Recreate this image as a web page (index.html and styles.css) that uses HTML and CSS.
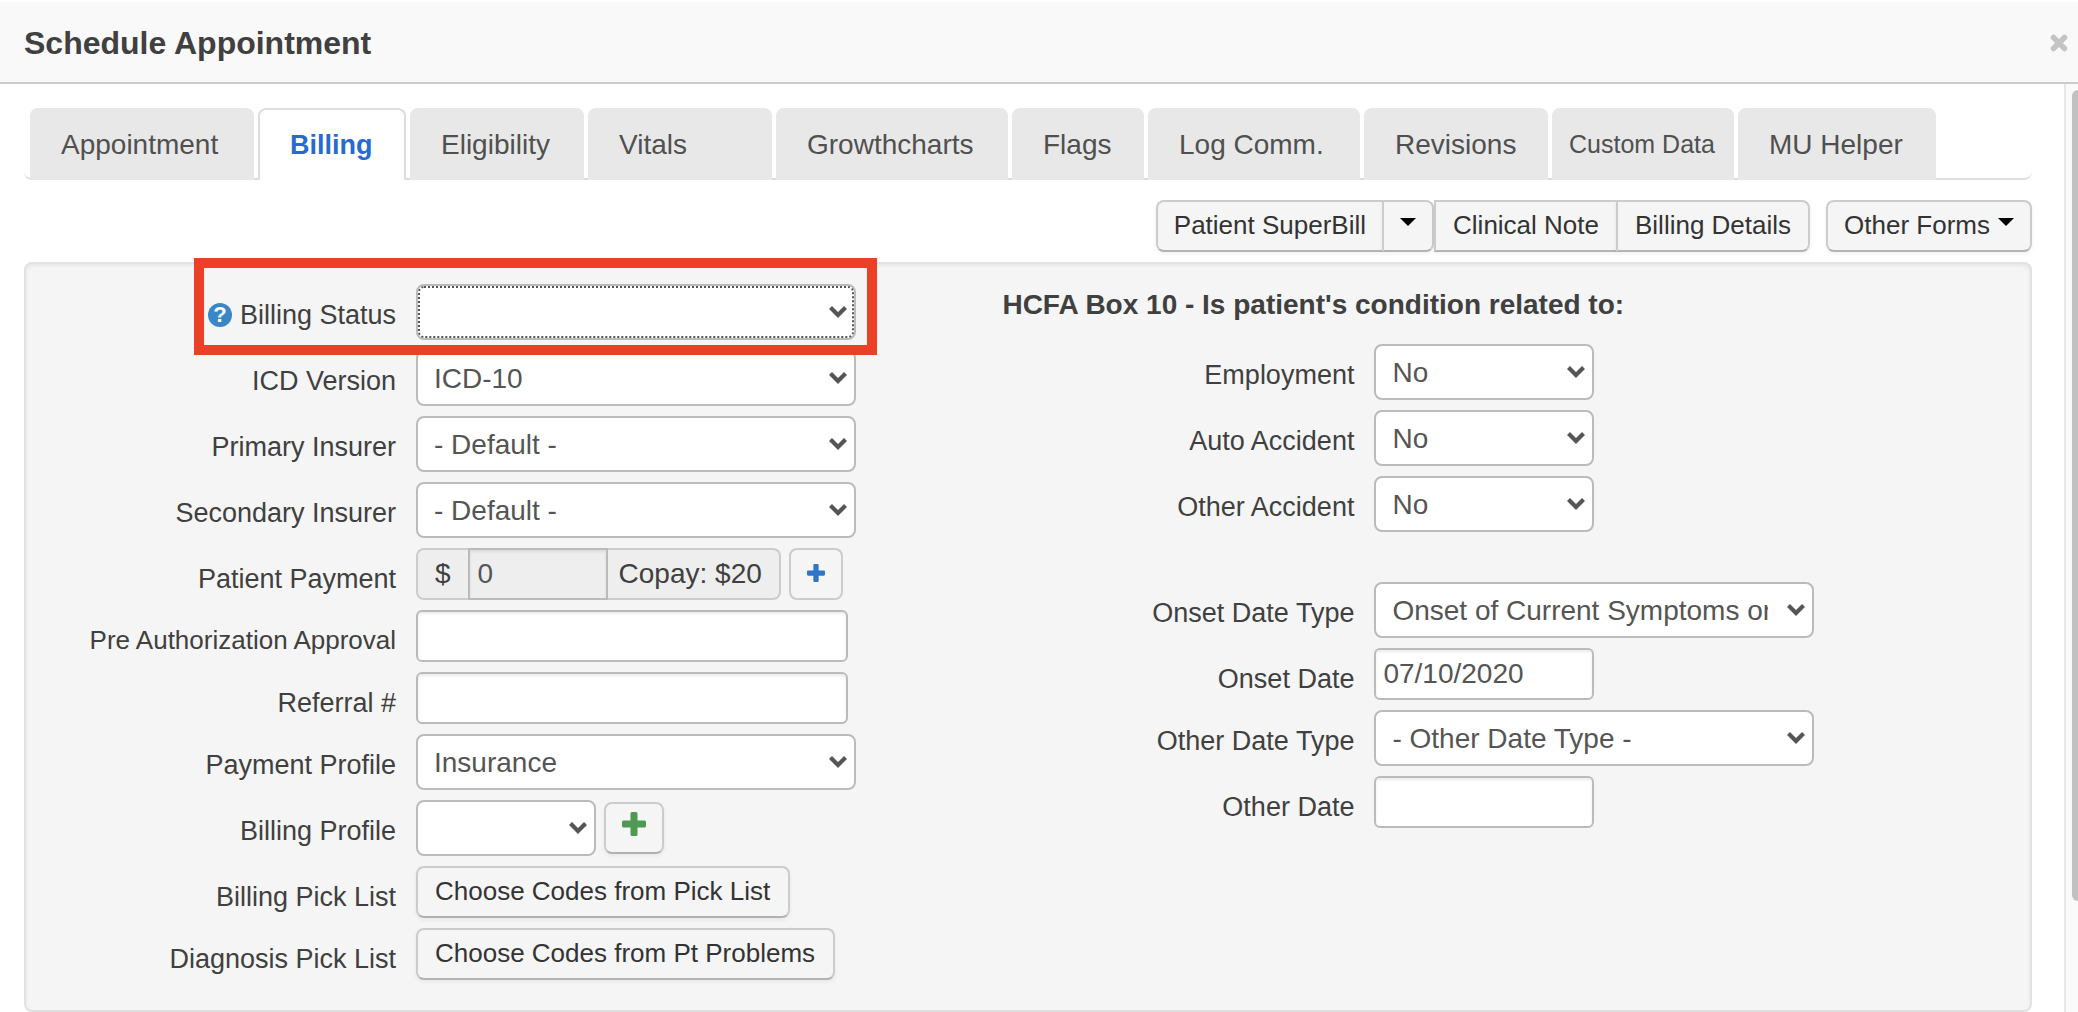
FILE: index.html
```html
<!DOCTYPE html>
<html lang="en">
<head>
<meta charset="utf-8">
<title>Schedule Appointment</title>
<link rel="stylesheet" href="styles.css">
</head>
<body>
<svg class="sprite" aria-hidden="true">
  <symbol id="chevron" viewBox="0 0 18 12"><path d="M1.500 1.500 9 9 16.500 1.500" fill="none" stroke="#555" stroke-width="4.200"/></symbol>
  <symbol id="plus" viewBox="0 0 24 24"><path d="M10 0h4q1.500 0 1.500 1.500v7h7q1.500 0 1.500 1.500v4q0 1.500-1.500 1.500h-7v7q0 1.500-1.500 1.500h-4q-1.500 0-1.500-1.500v-7h-7q-1.500 0-1.500-1.500v-4q0-1.500 1.500-1.500h7v-7q0-1.500 1.500-1.500z" fill="currentColor"/></symbol>
</svg>

<header class="dialog-header">
  <h1 class="dialog-title">Schedule Appointment</h1>
  <button class="close" type="button" aria-label="Close">
    <svg width="18" height="18" viewBox="0 0 18 18"><path d="M3.500 3.500 14.500 14.500M14.500 3.500 3.500 14.500" stroke="currentColor" stroke-width="5.500" stroke-linecap="round"/></svg>
  </button>
</header>

<div class="dialog-body">
  <main class="content">
    <nav class="tabs" aria-label="Appointment sections">
      <a class="tab" href="#appointment">Appointment</a>
      <a class="tab tab-active" href="#billing" aria-current="page">Billing</a>
      <a class="tab" href="#eligibility">Eligibility</a>
      <a class="tab" href="#vitals">Vitals</a>
      <a class="tab" href="#growthcharts">Growthcharts</a>
      <a class="tab" href="#flags">Flags</a>
      <a class="tab" href="#log">Log Comm.</a>
      <a class="tab" href="#revisions">Revisions</a>
      <a class="tab tab-small" href="#custom">Custom Data</a>
      <a class="tab" href="#helper">MU Helper</a>
    </nav>

    <div class="toolbar">
      <div class="btn-group">
        <button class="btn" type="button">Patient SuperBill</button>
        <button class="btn" type="button" aria-label="More SuperBill options"><span class="caret"></span></button>
      </div>
      <div class="btn-group btn-group-flat">
        <button class="btn" type="button">Clinical Note</button>
        <button class="btn" type="button">Billing Details</button>
      </div>
      <button class="btn btn-forms" type="button">Other Forms<span class="caret"></span></button>
    </div>

    <form class="panel">
      <section class="fields">
        <div class="field field-marked">
          <div class="label-cell"><a class="help" href="#help" aria-label="Billing status help">?</a><label for="status">Billing Status</label></div>
          <div class="select-box wide"><select class="select select-focused" id="status"><option></option></select><svg class="chevron"><use href="#chevron"/></svg></div>
          <div class="marker"></div>
        </div>
        <div class="field">
          <label class="label-cell" for="icd">ICD Version</label>
          <div class="select-box wide"><select class="select" id="icd"><option>ICD-10</option></select><svg class="chevron"><use href="#chevron"/></svg></div>
        </div>
        <div class="field">
          <label class="label-cell" for="primary">Primary Insurer</label>
          <div class="select-box wide"><select class="select" id="primary"><option>- Default -</option></select><svg class="chevron"><use href="#chevron"/></svg></div>
        </div>
        <div class="field">
          <label class="label-cell" for="secondary">Secondary Insurer</label>
          <div class="select-box wide"><select class="select" id="secondary"><option>- Default -</option></select><svg class="chevron"><use href="#chevron"/></svg></div>
        </div>
        <div class="field">
          <label class="label-cell" for="payment">Patient Payment</label>
          <div class="controls">
            <div class="input-group">
              <span class="addon addon-currency">$</span>
              <input class="input input-amount" id="payment" type="text" value="0" readonly>
              <span class="addon">Copay: $20</span>
            </div>
            <button class="btn btn-pay" type="button" aria-label="Add payment"><svg width="20" height="20"><use href="#plus"/></svg></button>
          </div>
        </div>
        <div class="field">
          <label class="label-cell label-compact" for="preauth">Pre Authorization Approval</label>
          <input class="input input-long" id="preauth" type="text">
        </div>
        <div class="field">
          <label class="label-cell" for="referral">Referral #</label>
          <input class="input input-long" id="referral" type="text">
        </div>
        <div class="field">
          <label class="label-cell" for="pay-profile">Payment Profile</label>
          <div class="select-box wide"><select class="select" id="pay-profile"><option>Insurance</option></select><svg class="chevron"><use href="#chevron"/></svg></div>
        </div>
        <div class="field">
          <label class="label-cell" for="bill-profile">Billing Profile</label>
          <div class="controls">
            <div class="select-box short"><select class="select" id="bill-profile"><option></option></select><svg class="chevron"><use href="#chevron"/></svg></div>
            <button class="btn btn-add" type="button" aria-label="Add billing profile"><svg width="24" height="24"><use href="#plus"/></svg></button>
          </div>
        </div>
        <div class="field">
          <label class="label-cell" for="pick">Billing Pick List</label>
          <div class="controls"><button class="btn btn-pick" id="pick" type="button">Choose Codes from Pick List</button></div>
        </div>
        <div class="field">
          <label class="label-cell" for="problems">Diagnosis Pick List</label>
          <div class="controls"><button class="btn btn-pick" id="problems" type="button">Choose Codes from Pt Problems</button></div>
        </div>
      </section>

      <section class="fields">
        <h2 class="section-title">HCFA Box 10 - Is patient's condition related to:</h2>
        <div class="field">
          <label class="label-cell" for="employment">Employment</label>
          <div class="select-box medium"><select class="select" id="employment"><option>No</option><option>Yes</option></select><svg class="chevron"><use href="#chevron"/></svg></div>
        </div>
        <div class="field">
          <label class="label-cell" for="auto">Auto Accident</label>
          <div class="select-box medium"><select class="select" id="auto"><option>No</option><option>Yes</option></select><svg class="chevron"><use href="#chevron"/></svg></div>
        </div>
        <div class="field">
          <label class="label-cell" for="accident">Other Accident</label>
          <div class="select-box medium"><select class="select" id="accident"><option>No</option><option>Yes</option></select><svg class="chevron"><use href="#chevron"/></svg></div>
        </div>
        <div class="field field-spaced">
          <label class="label-cell" for="onset-type">Onset Date Type</label>
          <div class="select-box wide"><select class="select" id="onset-type"><option>Onset of Current Symptoms or Illness</option></select><svg class="chevron"><use href="#chevron"/></svg></div>
        </div>
        <div class="field">
          <label class="label-cell" for="onset">Onset Date</label>
          <input class="input medium" id="onset" type="text" value="07/10/2020">
        </div>
        <div class="field">
          <label class="label-cell" for="other-type">Other Date Type</label>
          <div class="select-box wide"><select class="select" id="other-type"><option>- Other Date Type -</option></select><svg class="chevron"><use href="#chevron"/></svg></div>
        </div>
        <div class="field">
          <label class="label-cell" for="other">Other Date</label>
          <input class="input medium" id="other" type="text">
        </div>
      </section>
    </form>
  </main>
  <div class="rail"><div class="rail-thumb"></div></div>
</div>
</body>
</html>
```
FILE: styles.css
```css
* { box-sizing: border-box; }

body {
  display: flex;
  flex-direction: column;
  min-height: 100vh;
  margin: 0;
  border-top: 2px solid #fff;
  background: #fff;
  color: #404040;
  font-family: "Liberation Sans", Arial, sans-serif;
  font-size: 27px;
}

button, input, select { margin: 0; font-family: inherit; }

.sprite { display: none; }

/* Header */
.dialog-header {
  display: flex;
  align-items: center;
  justify-content: space-between;
  padding: 21px 10px 19px 24px;
  border-bottom: 2px solid #ccc;
  background: #f9f9f9;
}
.dialog-title { margin: 0; font-size: 32px; line-height: 40px; }
.close { display: flex; padding: 0; border: 0; background: none; color: #c4c4c4; }

.dialog-body { display: flex; flex: 1; }
.content { flex: 1; min-width: 0; padding: 24px 32px 0 24px; }

/* Tabs */
.tabs {
  display: grid;
  grid-template-columns: 224px 148px 174px 184px 232px 132px 212px 184px 182px 198px;
  gap: 4px;
  padding-left: 6px;
  border-bottom: 2px solid #ddd;
  border-radius: 8px;
}
.tab {
  height: 72px;
  margin-bottom: -2px;
  padding-left: 29px;
  border: 2px solid #e8e8e8;
  border-bottom: 0;
  border-radius: 8px 8px 0 0;
  background: #e8e8e8;
  color: #505050;
  font-size: 28px;
  line-height: 70px;
  text-decoration: none;
  white-space: nowrap;
}
.tab-active { padding-left: 30px; border-color: #ddd; background: #fff; color: #2a6ad0; font-size: 27px; font-weight: bold; }
.tab-small { padding-left: 15px; font-size: 25px; line-height: 68px; }

/* Buttons */
.toolbar { display: flex; justify-content: flex-end; padding: 20px 0 10px; }
.btn-group { display: flex; }
.btn {
  display: flex;
  align-items: center;
  justify-content: center;
  height: 52px;
  padding: 0 16px 2px;
  border: 2px solid #ccc;
  border-bottom-color: #b3b3b3;
  border-radius: 8px;
  background: #f5f5f5;
  box-shadow: 0 2px 4px rgba(0, 0, 0, 0.06);
  color: #333;
  font-size: 26px;
  white-space: nowrap;
}
.btn-group .btn:first-child { border-top-right-radius: 0; border-bottom-right-radius: 0; }
.btn-group .btn:last-child { margin-left: -2px; border-top-left-radius: 0; border-bottom-left-radius: 0; }
.btn-group-flat .btn { padding: 0 17px 2px; }
.btn-group-flat .btn:first-child { border-radius: 0; }
.btn-forms { gap: 8px; margin-left: 16px; }
.btn-pick { padding: 0 18px 2px 17px; }
.caret {
  margin-bottom: 6px;
  border: 8px solid transparent;
  border-top-color: #000;
  border-bottom: 0;
}
.btn-pay { width: 54px; border-bottom-color: #ccc; box-shadow: none; color: #2f76c9; }
.btn-add { width: 60px; padding-bottom: 8px; color: #509954; }

/* Billing form */
.panel {
  display: grid;
  grid-template-columns: 11fr 12fr;
  padding: 20px 0 30px;
  border: 2px solid #e2e2e2;
  border-radius: 8px;
  background: #f5f5f5;
  box-shadow: inset 0 2px 4px rgba(0, 0, 0, 0.06);
}
.fields { display: flex; flex-direction: column; gap: 10px; min-width: 0; }
.section-title { margin: 0 0 8px; padding-left: 18px; font-size: 28px; line-height: 42px; }
.field { display: flex; align-items: flex-start; gap: 20px; }
.field-spaced { margin-top: 40px; }
.label-cell {
  display: flex;
  align-items: center;
  justify-content: flex-end;
  gap: 8px;
  width: 370px;
  padding-top: 10px;
  line-height: 42px;
}
.label-compact { font-size: 26px; line-height: 40px; }
.help {
  width: 24px;
  height: 24px;
  border-radius: 50%;
  background: #3a87c8;
  color: #fff;
  font-size: 22px;
  font-weight: bold;
  line-height: 24px;
  text-align: center;
  text-decoration: none;
}

.controls { display: flex; align-items: center; gap: 8px; }
.wide { width: 440px; }
.medium { width: 220px; }
.short { width: 180px; }

.select-box { display: grid; align-items: center; }
.select {
  grid-area: 1 / 1;
  width: 100%;
  height: 56px;
  padding: 0 44px 0 16px;
  border: 2px solid #bbb;
  border-radius: 8px;
  appearance: none;
  background: #fff;
  color: #555;
  font-size: 28px;
}
.select-focused { outline: 2px dotted #555; outline-offset: -4px; }
.chevron {
  grid-area: 1 / 1;
  justify-self: end;
  width: 18px;
  height: 12px;
  margin-right: 9px;
  pointer-events: none;
}

.input {
  height: 52px;
  padding: 0 7px;
  border: 2px solid #bbb;
  border-radius: 6px;
  background: #fff;
  box-shadow: inset 0 2px 3px rgba(0, 0, 0, 0.08);
  color: #555;
  font-size: 28px;
}
.input-long { width: 432px; }
.input-group { display: flex; }
.input-amount { width: 140px; padding-left: 8px; border-radius: 0; background: #eee; }
.addon {
  padding: 0 17px 0 11px;
  border: 2px solid #ccc;
  border-left: 0;
  border-radius: 0 8px 8px 0;
  background: #eee;
  font-size: 28px;
  line-height: 48px;
}
.addon-currency {
  padding: 0 17px;
  border-left: 2px solid #ccc;
  border-right: 0;
  border-radius: 8px 0 0 8px;
}

/* Highlight around the billing status row */
.field-marked { position: relative; }
.marker {
  position: absolute;
  top: -26px;
  bottom: -15px;
  left: 168px;
  width: 683px;
  border: 10px solid #eb4026;
  pointer-events: none;
}

/* Scroll rail */
.rail {
  width: 14px;
  padding: 6px 0 0 6px;
  border-left: 2px solid #e8e8e8;
  background: #fafafa;
}
.rail-thumb { height: 88%; border-radius: 8px 0 0 8px; background: #c1c1c1; }
```
